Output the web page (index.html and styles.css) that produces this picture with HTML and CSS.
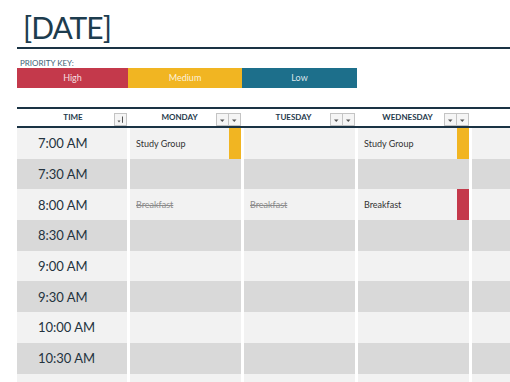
FILE: index.html
```html
<!DOCTYPE html>
<html>
<head>
<meta charset="utf-8">
<link rel="stylesheet" href="styles.css">
</head>
<body>
<div class="page">
  <h1 class="title">[DATE]</h1>
  <div class="key-label">PRIORITY KEY:</div>
  <div class="key">
    <div class="key-item high">High</div>
    <div class="key-item medium">Medium</div>
    <div class="key-item low">Low</div>
  </div>

  <div class="sched">
    <div class="head">
      <div class="hcell time-h">TIME<span class="btns"><span class="fbtn sort"><svg width="11" height="11" viewBox="0 0 11 11"><polygon points="2.5,6.5 5.5,6.5 4,8.5" fill="#555"/><line x1="7.5" y1="2.5" x2="7.5" y2="8.8" stroke="#555" stroke-width="1"/></svg></span></span></div>
      <div class="hcell day-h">MONDAY<span class="btns"><span class="fbtn"><svg width="11" height="11" viewBox="0 0 11 11"><polygon points="3,5.5 7.5,5.5 5.25,8" fill="#555"/></svg></span><span class="fbtn"><svg width="11" height="11" viewBox="0 0 11 11"><polygon points="3,5.5 7.5,5.5 5.25,8" fill="#555"/></svg></span></span></div>
      <div class="hcell day-h">TUESDAY<span class="btns"><span class="fbtn"><svg width="11" height="11" viewBox="0 0 11 11"><polygon points="3,5.5 7.5,5.5 5.25,8" fill="#555"/></svg></span><span class="fbtn"><svg width="11" height="11" viewBox="0 0 11 11"><polygon points="3,5.5 7.5,5.5 5.25,8" fill="#555"/></svg></span></span></div>
      <div class="hcell day-h">WEDNESDAY<span class="btns"><span class="fbtn"><svg width="11" height="11" viewBox="0 0 11 11"><polygon points="3,5.5 7.5,5.5 5.25,8" fill="#555"/></svg></span><span class="fbtn"><svg width="11" height="11" viewBox="0 0 11 11"><polygon points="3,5.5 7.5,5.5 5.25,8" fill="#555"/></svg></span></span></div>
      <div class="hcell day-h"></div>
    </div>
    <div class="rows">
      <div class="cell time light">7:00 AM</div>
      <div class="cell light">Study Group<span class="flag medium-flag"></span></div>
      <div class="cell light"></div>
      <div class="cell light">Study Group<span class="flag medium-flag"></span></div>
      <div class="cell light"></div>

      <div class="cell time dark">7:30 AM</div>
      <div class="cell dark"></div>
      <div class="cell dark"></div>
      <div class="cell dark"></div>
      <div class="cell dark"></div>

      <div class="cell time light">8:00 AM</div>
      <div class="cell light done">Breakfast</div>
      <div class="cell light done">Breakfast</div>
      <div class="cell light">Breakfast<span class="flag high-flag"></span></div>
      <div class="cell light"></div>

      <div class="cell time dark">8:30 AM</div>
      <div class="cell dark"></div>
      <div class="cell dark"></div>
      <div class="cell dark"></div>
      <div class="cell dark"></div>

      <div class="cell time light">9:00 AM</div>
      <div class="cell light"></div>
      <div class="cell light"></div>
      <div class="cell light"></div>
      <div class="cell light"></div>

      <div class="cell time dark">9:30 AM</div>
      <div class="cell dark"></div>
      <div class="cell dark"></div>
      <div class="cell dark"></div>
      <div class="cell dark"></div>

      <div class="cell time light">10:00 AM</div>
      <div class="cell light"></div>
      <div class="cell light"></div>
      <div class="cell light"></div>
      <div class="cell light"></div>

      <div class="cell time dark">10:30 AM</div>
      <div class="cell dark"></div>
      <div class="cell dark"></div>
      <div class="cell dark"></div>
      <div class="cell dark"></div>

      <div class="cell time light"></div>
      <div class="cell light"></div>
      <div class="cell light"></div>
      <div class="cell light"></div>
      <div class="cell light"></div>
    </div>
  </div>
</div>
</body>
</html>
```

FILE: styles.css
```css
html, body {
  margin: 0;
  padding: 0;
  background: #fff;
  overflow: hidden;
}
body {
  width: 510px;
  height: 382px;
  font-family: Lato, "Open Sans", sans-serif;
}
.page {
  padding-left: 17px;
  overflow: hidden;
  height: 382px;
}
.title {
  margin: 0;
  padding: 9px 0 2px 6px;
  font-size: 30px;
  line-height: 36px;
  font-weight: 400;
  letter-spacing: -1px;
  color: #1d3c4e;
  border-bottom: 2px solid #1a3344;
}
.key-label {
  margin-top: 9px;
  padding-left: 3px;
  font-size: 8px;
  line-height: 10px;
  color: #3d6376;
}
.key {
  display: flex;
  height: 20px;
}
.key-item {
  font-size: 9px;
  line-height: 20px;
  text-align: center;
  color: rgba(255, 255, 255, 0.85);
}
.high { width: 111px; background: #c4394b; }
.medium { width: 114px; background: #f1b522; }
.low { width: 115px; background: #1d6f8b; }

.sched {
  margin-top: 19px;
  width: 580px;
}
.head {
  display: grid;
  grid-template-columns: 110px 111px 111px 111px 111px;
  column-gap: 3px;
  height: 17px;
  border-top: 2px solid #1a3344;
  border-bottom: 2px solid #1a3344;
}
.hcell {
  position: relative;
  font-size: 8px;
  font-weight: 700;
  line-height: 17px;
  text-align: center;
  color: #1f3a4c;
}
.time-h { padding-left: 2px; }
.day-h { padding-right: 12px; }
.btns {
  position: absolute;
  right: 0;
  bottom: 0;
  display: flex;
}
.fbtn {
  box-sizing: border-box;
  width: 13px;
  height: 13px;
  border: 1px solid #c4c4c4;
  background: #f5f5f5;
  display: flex;
  align-items: center;
  justify-content: center;
}
.fbtn + .fbtn { margin-left: -1px; }
.fbtn svg { display: block; }

.rows {
  display: grid;
  grid-template-columns: 110px 111px 111px 111px 111px;
  grid-auto-rows: 30.7px;
  column-gap: 3px;
}
.cell {
  position: relative;
  display: flex;
  align-items: center;
  padding-left: 6px;
  font-size: 9px;
  color: #333;
}
.light { background: #f2f2f2; }
.dark { background: #d9d9d9; }
.time {
  padding-left: 21px;
  font-size: 13px;
  color: #24333e;
}
.done {
  color: #8c8c8c;
  text-decoration: line-through;
}
.flag {
  position: absolute;
  top: 0;
  right: 0;
  bottom: 0;
  width: 12px;
}
.medium-flag { background: #f1b522; }
.high-flag { background: #c4394b; }
```
